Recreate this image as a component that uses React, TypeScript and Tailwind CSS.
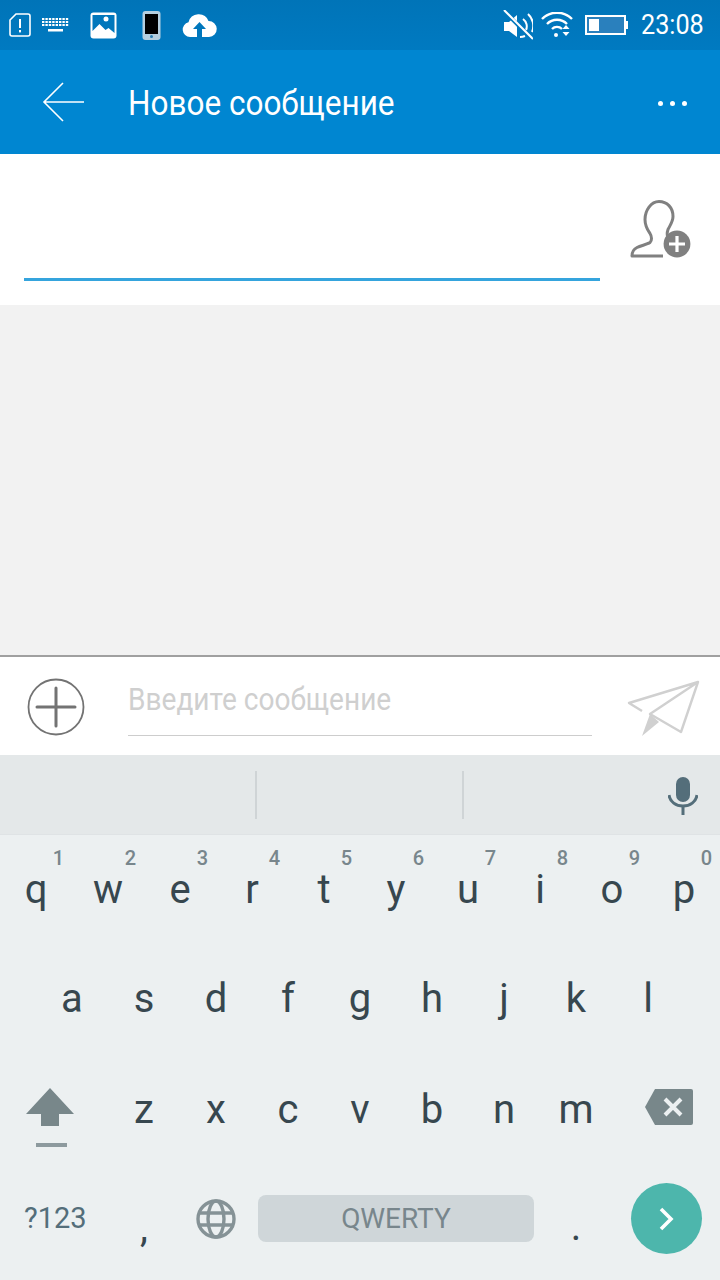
const rowOne = [
  ["q", "1"],
  ["w", "2"],
  ["e", "3"],
  ["r", "4"],
  ["t", "5"],
  ["y", "6"],
  ["u", "7"],
  ["i", "8"],
  ["o", "9"],
  ["p", "0"],
];
const rowTwo = ["a", "s", "d", "f", "g", "h", "j", "k", "l"];
const rowThree = ["z", "x", "c", "v", "b", "n", "m"];

const Key = ({ label, hint }: { label: string; hint?: string }) => (
  <div className="relative flex h-full w-[72px] items-center justify-center text-[40px] leading-none text-[#37474f]">
    {hint && (
      <span className="absolute top-[12px] right-[8px] text-[20px] leading-[22px] font-medium text-[#78868c]">
        {hint}
      </span>
    )}
    <span>{label}</span>
  </div>
);

const StatusBar = () => (
  <div className="flex h-[50px] items-center bg-gradient-to-b from-[#0074b8] to-[#007ac1] text-white">
    <svg width="22" height="26" viewBox="0 0 22 26" className="ml-[9px]">
      <path d="M7 2h12a2 2 0 0 1 2 2v18a2 2 0 0 1-2 2H3a2 2 0 0 1-2-2V8z" fill="none" stroke="#fff" strokeWidth="1.6" />
      <rect x="10" y="7" width="2" height="9" fill="#fff" />
      <rect x="10" y="18" width="2" height="2.4" fill="#fff" />
    </svg>
    <svg width="29" height="15" viewBox="0 0 29 15" className="ml-[10px]">
      <path d="M1 1h27M1 4h27M1 7h27" stroke="#fff" strokeWidth="2" strokeDasharray="2.4 1" />
      <rect x="7" y="11" width="15" height="2.5" fill="#fff" />
    </svg>
    <svg width="27" height="27" viewBox="0 0 27 27" className="ml-[20px]">
      <rect x="0.5" y="0.5" width="26" height="26" rx="3" fill="#fff" />
      <path d="M2.5 3h22v18l-6-5-3 2-6-6-7 7z" fill="#0077bc" />
      <circle cx="16" cy="7" r="2.5" fill="#fff" />
    </svg>
    <svg width="19" height="29" viewBox="0 0 19 29" className="ml-[25px]">
      <rect x="0.5" y="0" width="18" height="29" rx="3" fill="#b5cfdf" />
      <rect x="3" y="3" width="13" height="20" fill="#000" />
      <circle cx="9.5" cy="25.5" r="1.5" fill="#2a7fb5" />
    </svg>
    <svg width="35" height="25" viewBox="0 0 35 25" className="ml-[21px]">
      <path
        d="M8 24a7.5 7.5 0 0 1-1.5-14.8A10.5 10.5 0 0 1 26.5 8 8 8 0 0 1 27 24z"
        fill="#fff"
      />
      <path d="M17.5 9l6.5 7h-4v8h-5v-8h-4z" fill="#0077bc" />
    </svg>
    <svg width="30" height="30" viewBox="0 0 30 30" className="ml-auto">
      <path d="M1 12h5l8-7v22l-8-6H1z" fill="#fff" />
      <path d="M20 9a9 9 0 0 1 3 11M25 4a16 16 0 0 1 4 18M17 27a14 14 0 0 0 5-1" fill="none" stroke="#fff" strokeWidth="2" />
      <path d="M1 1l29 29" stroke="#0077bc" strokeWidth="4" />
      <path d="M1 0l29 29" stroke="#fff" strokeWidth="2" />
    </svg>
    <svg width="32" height="26" viewBox="0 0 32 26" className="ml-[8px]">
      <path d="M1 7a21 21 0 0 1 30 0M6 12a14 14 0 0 1 20 0M11 17a7 7 0 0 1 10 0" fill="none" stroke="#fff" strokeWidth="2.4" />
      <circle cx="15" cy="23" r="2" fill="#fff" />
      <path d="M25 13l3.5 4h-7zM25 24l3.5-4h-7z" fill="#fff" />
    </svg>
    <div className="ml-[12px] flex h-[20px] w-[41px] items-stretch border-2 border-white bg-[#2a80bd] p-[2px] pr-0">
      <div className="w-[10px] bg-white" />
    </div>
    <div className="h-[8px] w-[2px] bg-white" />
    <span className="mr-[17px] ml-[13px] w-[62px] origin-left scale-x-[0.9] text-[28px] leading-none whitespace-nowrap">
      23:08
    </span>
  </div>
);

const Header = () => (
  <div className="flex h-[104px] items-center bg-[#0086d1] text-white">
    <svg width="44" height="42" viewBox="0 0 44 42" fill="none" stroke="#fff" strokeWidth="1.6" className="ml-[42px]">
      <path d="M42 21H2M21 2L2 21l19 19" />
    </svg>
    <h1 className="mt-[2px] ml-[42px] origin-left scale-x-[0.9] text-[35px] leading-none whitespace-nowrap">
      Новое сообщение
    </h1>
    <div className="mt-[2px] mr-[33px] ml-auto flex gap-[7px]">
      <div className="h-[5px] w-[5px] rounded-full bg-white" />
      <div className="h-[5px] w-[5px] rounded-full bg-white" />
      <div className="h-[5px] w-[5px] rounded-full bg-white" />
    </div>
  </div>
);

const Recipient = () => (
  <div className="relative h-[151px] bg-white">
    <div className="absolute top-[124px] left-[24px] h-[3px] w-[576px] bg-[#35a4dd]" />
    <svg width="62" height="60" viewBox="0 0 62 60" fill="none" className="absolute top-[46px] left-[630px]">
      <path
        d="M33 56H2c0-5 2-7 5-8.5 4-2 10-3 13-5 2-2 2-6 0-9-2-3-5-7-5-14 0-9 6-18 14-18s14 6 14 15c0 5-3 9-5 13-1 3-1 6 0 8"
        stroke="#808080"
        strokeWidth="3"
        strokeLinejoin="round"
      />
      <circle cx="47" cy="44" r="13.4" fill="#808080" />
      <path d="M47 36v16M39 44h16" stroke="#fff" strokeWidth="3.2" />
    </svg>
  </div>
);

const Composer = () => (
  <div className="flex h-[100px] border-t-2 border-[#a0a0a0] bg-white">
    <svg width="58" height="58" viewBox="0 0 58 58" fill="none" stroke="#737373" className="mt-[21px] ml-[27px]">
      <circle cx="29" cy="29" r="27.5" strokeWidth="1.8" />
      <path d="M29 10v38M10 29h38" strokeWidth="3" strokeLinecap="round" />
    </svg>
    <div className="mt-[20px] ml-[43px] h-[59px] w-[464px] border-b border-[#cdcdcd] leading-[46px] text-[#cfcfcf]">
      <span className="inline-block origin-left scale-x-[0.905] text-[31px] whitespace-nowrap">Введите сообщение</span>
    </div>
    <svg width="74" height="58" viewBox="0 0 74 58" fill="none" className="mt-[23px] ml-[35px]">
      <path d="M71 2L2 23l13 8M71 2L23 34l31 18z" stroke="#d0d0d0" strokeWidth="2.4" strokeLinejoin="round" />
      <path d="M23 34l-8 22 17-14z" fill="#d0d0d0" />
    </svg>
  </div>
);

const Suggestions = () => (
  <div className="flex h-[79px] items-center bg-[#e4e8e9]">
    <div className="ml-[255px] h-[48px] w-[2px] bg-[#cfd4d6]" />
    <div className="ml-[205px] h-[48px] w-[2px] bg-[#cfd4d6]" />
    <svg width="30" height="40" viewBox="0 0 30 40" className="mt-[3px] ml-[204px]">
      <rect x="8" y="1" width="14" height="25" rx="7" fill="#546e7a" />
      <path d="M1 19c1 7 7 11 14 11s13-4 14-11" fill="none" stroke="#546e7a" strokeWidth="3" />
      <rect x="13.5" y="29" width="3" height="10" fill="#546e7a" />
    </svg>
  </div>
);

const Keyboard = () => (
  <div className="border-t border-[#dfe3e5] bg-[#ecf0f1]">
    <div className="flex h-[110px]">
      {rowOne.map(([label, hint]) => (
        <Key key={label} label={label} hint={hint} />
      ))}
    </div>
    <div className="flex h-[109px] pb-[2px] pl-[36px]">
      {rowTwo.map((label) => (
        <Key key={label} label={label} />
      ))}
    </div>
    <div className="flex h-[113px] items-center">
      <div className="flex h-full w-[108px] flex-col items-center justify-center pr-[8px]">
        <svg width="48" height="59" viewBox="0 0 48 59" className="mt-[13px]">
          <path d="M24 0l24 26H33v12H15V26H0z" fill="#78878a" />
          <rect x="10" y="55" width="31" height="4" fill="#8d9a9e" />
        </svg>
      </div>
      <div className="flex h-full pb-[2px]">
        {rowThree.map((label) => (
          <Key key={label} label={label} />
        ))}
      </div>
      <svg width="48" height="36" viewBox="0 0 48 36" className="mb-[8px] ml-[33px]">
        <path d="M10 0h36a2 2 0 0 1 2 2v32a2 2 0 0 1-2 2H10L0 18z" fill="#78878a" />
        <path d="M20 10l16 16M36 10L20 26" stroke="#ecf0f1" strokeWidth="4" />
      </svg>
    </div>
    <div className="flex h-[113px] items-center pb-[10px]">
      <span className="ml-[24px] w-[84px] text-[29px] leading-none text-[#546e7a]">?123</span>
      <span className="w-[72px] pt-[18px] text-center text-[40px] leading-none text-[#37474f]">,</span>
      <svg width="40" height="40" viewBox="0 0 40 40" fill="none" stroke="#859296" strokeWidth="3.4" className="ml-[16px]">
        <circle cx="20" cy="20" r="18" />
        <ellipse cx="20" cy="20" rx="8" ry="18" />
        <path d="M3 14h34M3 26h34" />
      </svg>
      <div className="ml-[22px] flex h-[47px] w-[276px] items-center justify-center rounded-[8px] bg-[#cfd6d9] text-[28px] leading-none text-[#78868c]">
        QWERTY
      </div>
      <span className="w-[84px] pt-[16px] text-center text-[40px] leading-none text-[#37474f]">.</span>
      <div className="ml-[13px] flex h-[71px] w-[71px] items-center justify-center rounded-full bg-[#4db6ac]">
        <svg width="16" height="24" viewBox="0 0 16 24" fill="none" stroke="#fff" strokeWidth="3.6">
          <path d="M2 2l10 10L2 22" />
        </svg>
      </div>
    </div>
  </div>
);

export default function App() {
  return (
    <div className="flex h-[1280px] w-[720px] flex-col overflow-hidden bg-[#f2f2f2] font-['Roboto',sans-serif]">
      <StatusBar />
      <Header />
      <Recipient />
      <div className="h-[350px] bg-[#f2f2f2]" />
      <Composer />
      <Suggestions />
      <Keyboard />
    </div>
  );
}
